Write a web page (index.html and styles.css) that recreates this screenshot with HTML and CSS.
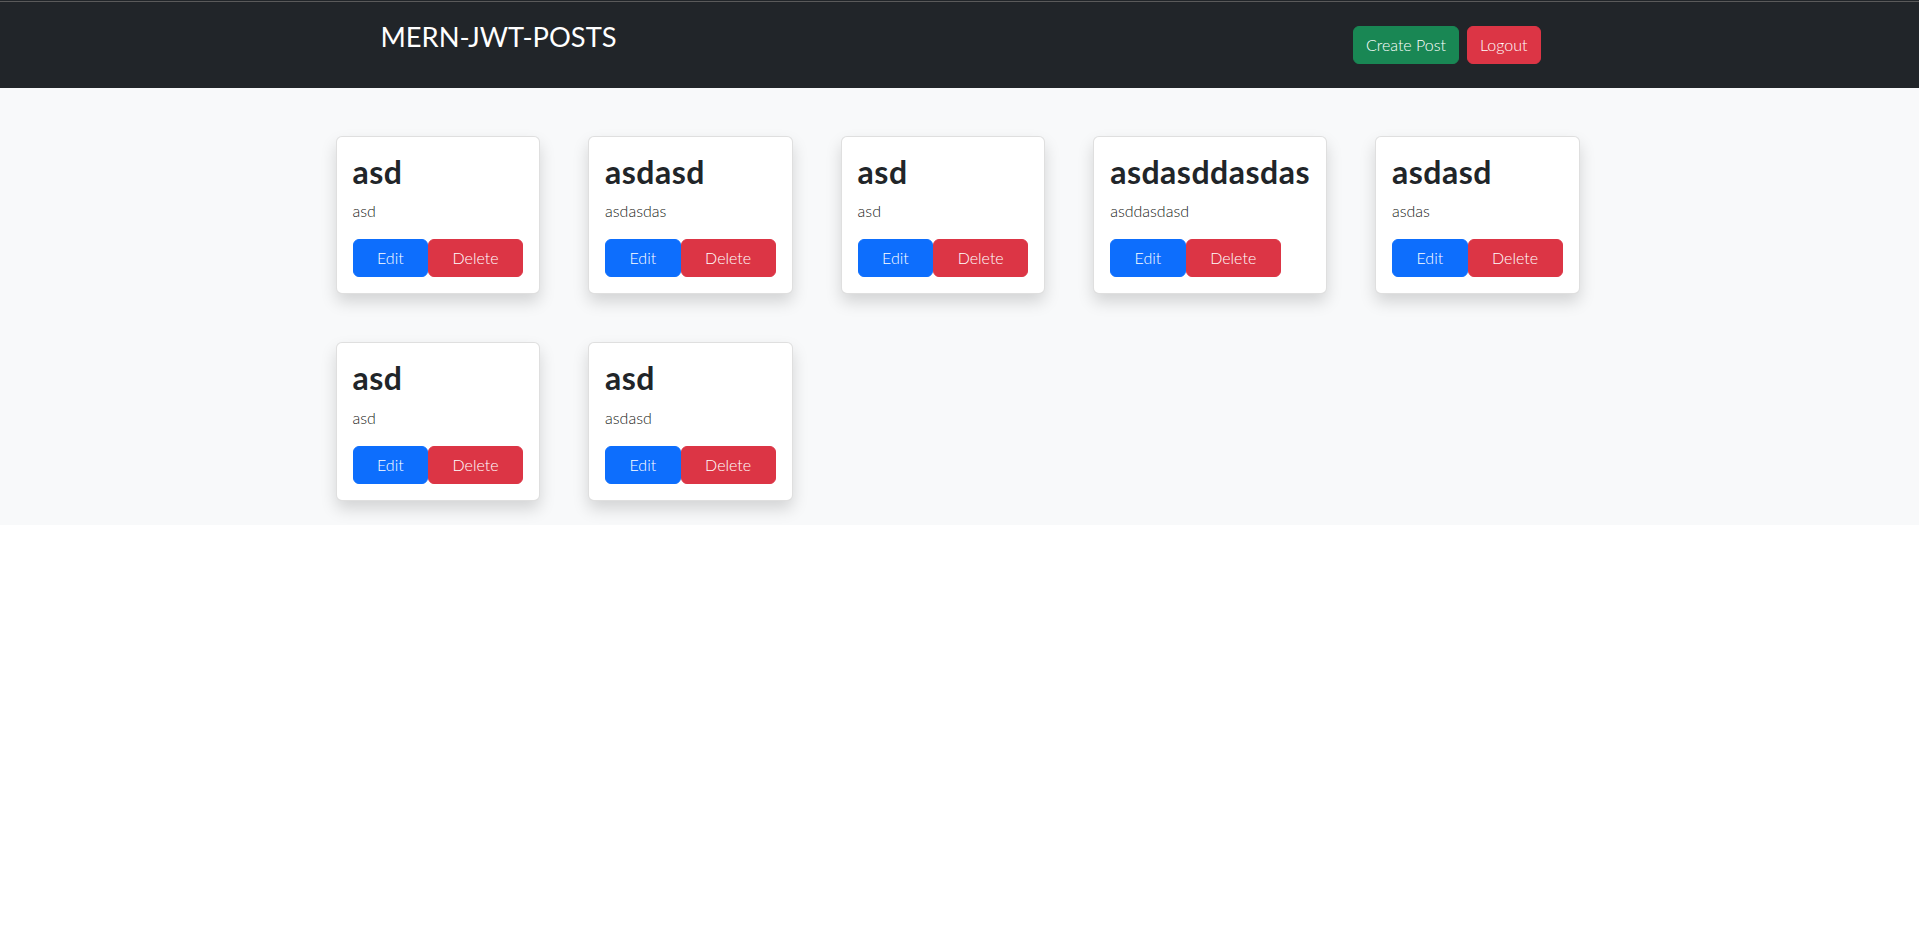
FILE: index.html
```html
<!DOCTYPE html>
<html lang="en">
<head>
<meta charset="utf-8">
<title>MERN-JWT-POSTS</title>
<link rel="stylesheet" href="styles.css">
</head>
<body>
<header class="navbar">
  <div class="container nav-inner">
    <h3 class="brand">MERN-JWT-POSTS</h3>
    <div class="nav-actions">
      <button class="btn btn-success">Create Post</button>
      <button class="btn btn-danger">Logout</button>
    </div>
  </div>
</header>
<main class="main">
  <div class="container posts">
    <div class="card"><div class="card-body"><h2 class="card-title">asd</h2><p class="card-text">asd</p><div class="actions"><button class="btn btn-primary btn-wide">Edit</button><button class="btn btn-danger btn-wide">Delete</button></div></div></div>
    <div class="card"><div class="card-body"><h2 class="card-title">asdasd</h2><p class="card-text">asdasdas</p><div class="actions"><button class="btn btn-primary btn-wide">Edit</button><button class="btn btn-danger btn-wide">Delete</button></div></div></div>
    <div class="card"><div class="card-body"><h2 class="card-title">asd</h2><p class="card-text">asd</p><div class="actions"><button class="btn btn-primary btn-wide">Edit</button><button class="btn btn-danger btn-wide">Delete</button></div></div></div>
    <div class="card"><div class="card-body"><h2 class="card-title">asdasddasdas</h2><p class="card-text">asddasdasd</p><div class="actions"><button class="btn btn-primary btn-wide">Edit</button><button class="btn btn-danger btn-wide">Delete</button></div></div></div>
    <div class="card"><div class="card-body"><h2 class="card-title">asdasd</h2><p class="card-text">asdas</p><div class="actions"><button class="btn btn-primary btn-wide">Edit</button><button class="btn btn-danger btn-wide">Delete</button></div></div></div>
    <div class="card"><div class="card-body"><h2 class="card-title">asd</h2><p class="card-text">asd</p><div class="actions"><button class="btn btn-primary btn-wide">Edit</button><button class="btn btn-danger btn-wide">Delete</button></div></div></div>
    <div class="card"><div class="card-body"><h2 class="card-title">asd</h2><p class="card-text">asdasd</p><div class="actions"><button class="btn btn-primary btn-wide">Edit</button><button class="btn btn-danger btn-wide">Delete</button></div></div></div>
  </div>
</main>
</body>
</html>
```
FILE: styles.css
```css
* { box-sizing: border-box; }
html, body {
  margin: 0;
  background: #fff;
  font-family: "Lato", "Open Sans", sans-serif;
  font-size: 16px;
  line-height: 1.5;
  color: #212529;
}
.container {
  width: 1320px;
  margin: 0 auto;
  padding: 0 12px;
}
.navbar {
  height: 88px;
  background: linear-gradient(#212529 0 1px, #5a5a5a 1px 2px, #212529 2px);
  display: flex;
  align-items: center;
}
.nav-inner {
  display: flex;
  align-items: center;
  justify-content: space-between;
  padding: 2px 79px 0 81px;
}
.brand {
  margin: 0 0 16px 0;
  font-size: 27.3px;
  font-weight: 400;
  line-height: 1.2;
  color: #fff;
}
.nav-actions {
  display: flex;
  gap: 8px;
}
.btn {
  font-family: inherit;
  font-size: 16px;
  font-weight: 300;
  line-height: 24px;
  padding: 6px 12px;
  border: 1px solid transparent;
  border-radius: 6px;
  color: #fff;
  cursor: pointer;
}
.btn-wide { padding: 6px 23.45px; }
.btn-success { background: #198754; border-color: #198754; }
.btn-danger { background: #dc3545; border-color: #dc3545; }
.btn-primary { background: #0d6efd; border-color: #0d6efd; }
.main {
  background: #f8f9fa;
  padding-top: 24px;
}
.posts {
  display: flex;
  flex-wrap: wrap;
  align-items: flex-start;
}
.card {
  margin: 24px;
  background: #fff;
  border: 1px solid rgba(0,0,0,.125);
  border-radius: 6px;
  box-shadow: 0 8px 16px rgba(0,0,0,.15);
}
.card-body { padding: 16px; }
.card-title {
  margin: 0 0 8px 0;
  font-size: 32px;
  font-weight: 700;
  line-height: 1.2;
  letter-spacing: 0.5px;
  color: #212529;
}
.card-text {
  margin: 0 0 16px 0;
  font-weight: 300;
  font-size: 16px;
  line-height: 24px;
  color: #1a1d20;
}
.actions { display: flex; }
```
